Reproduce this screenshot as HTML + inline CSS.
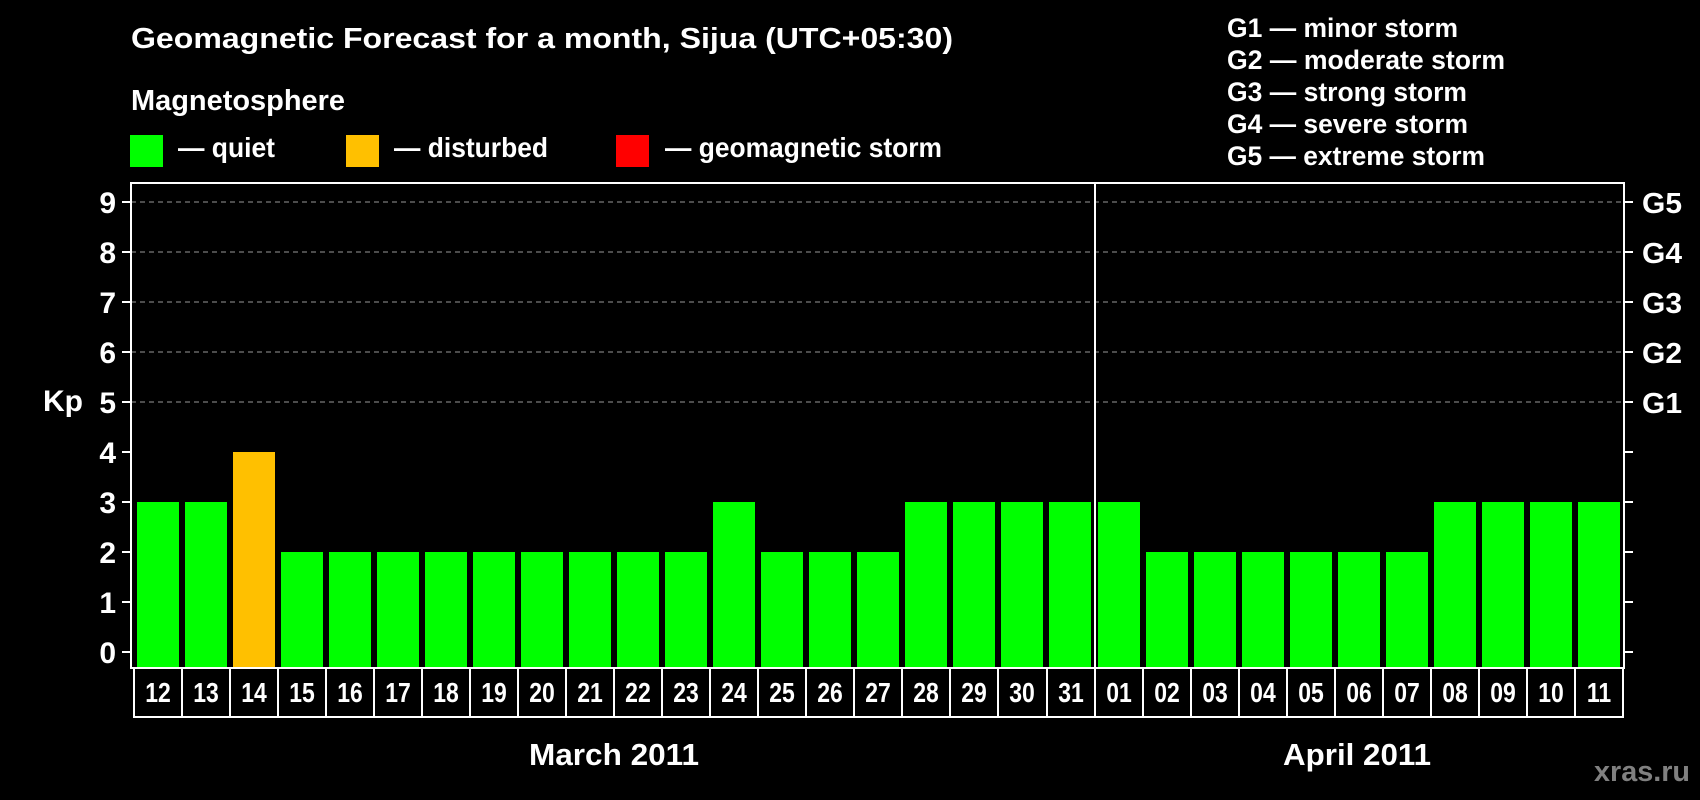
<!DOCTYPE html>
<html><head><meta charset="utf-8"><style>
html,body{margin:0;padding:0;background:#000;width:1700px;height:800px;overflow:hidden}
svg{display:block}
text{font-family:"Liberation Sans",Arial,sans-serif;font-weight:bold;fill:#fff}
</style></head><body>
<svg width="1700" height="800" viewBox="0 0 1700 800" xmlns="http://www.w3.org/2000/svg">
<text x="131" y="48" font-size="29" textLength="822" lengthAdjust="spacingAndGlyphs">Geomagnetic Forecast for a month, Sijua (UTC+05:30)</text>
<text x="131" y="110" font-size="29" textLength="214" lengthAdjust="spacingAndGlyphs">Magnetosphere</text>
<rect x="130" y="135" width="33" height="32" fill="#00ff00"/>
<text x="178" y="157" font-size="28" textLength="97" lengthAdjust="spacingAndGlyphs">— quiet</text>
<rect x="346" y="135" width="33" height="32" fill="#ffc000"/>
<text x="394" y="157" font-size="28" textLength="154" lengthAdjust="spacingAndGlyphs">— disturbed</text>
<rect x="616" y="135" width="33" height="32" fill="#ff0000"/>
<text x="665" y="157" font-size="28" textLength="277" lengthAdjust="spacingAndGlyphs">— geomagnetic storm</text>

<g font-size="27">
<text x="1227" y="37" textLength="231" lengthAdjust="spacingAndGlyphs">G1 — minor storm</text>
<text x="1227" y="69" textLength="278" lengthAdjust="spacingAndGlyphs">G2 — moderate storm</text>
<text x="1227" y="101" textLength="240" lengthAdjust="spacingAndGlyphs">G3 — strong storm</text>
<text x="1227" y="133" textLength="241" lengthAdjust="spacingAndGlyphs">G4 — severe storm</text>
<text x="1227" y="165" textLength="258" lengthAdjust="spacingAndGlyphs">G5 — extreme storm</text>
</g>

<g stroke="#999" stroke-width="1" stroke-dasharray="5,4">
<line x1="131" y1="202" x2="1624" y2="202"/>
<line x1="131" y1="252" x2="1624" y2="252"/>
<line x1="131" y1="302" x2="1624" y2="302"/>
<line x1="131" y1="352" x2="1624" y2="352"/>
<line x1="131" y1="402" x2="1624" y2="402"/>
</g>

<g fill="#00ff00">
<rect x="137" y="502" width="42" height="166"/>
<rect x="185" y="502" width="42" height="166"/>
<rect x="233" y="452" width="42" height="216" fill="#ffc000"/>
<rect x="281" y="552" width="42" height="116"/>
<rect x="329" y="552" width="42" height="116"/>
<rect x="377" y="552" width="42" height="116"/>
<rect x="425" y="552" width="42" height="116"/>
<rect x="473" y="552" width="42" height="116"/>
<rect x="521" y="552" width="42" height="116"/>
<rect x="569" y="552" width="42" height="116"/>
<rect x="617" y="552" width="42" height="116"/>
<rect x="665" y="552" width="42" height="116"/>
<rect x="713" y="502" width="42" height="166"/>
<rect x="761" y="552" width="42" height="116"/>
<rect x="809" y="552" width="42" height="116"/>
<rect x="857" y="552" width="42" height="116"/>
<rect x="905" y="502" width="42" height="166"/>
<rect x="953" y="502" width="42" height="166"/>
<rect x="1001" y="502" width="42" height="166"/>
<rect x="1049" y="502" width="42" height="166"/>
<rect x="1098" y="502" width="42" height="166"/>
<rect x="1146" y="552" width="42" height="116"/>
<rect x="1194" y="552" width="42" height="116"/>
<rect x="1242" y="552" width="42" height="116"/>
<rect x="1290" y="552" width="42" height="116"/>
<rect x="1338" y="552" width="42" height="116"/>
<rect x="1386" y="552" width="42" height="116"/>
<rect x="1434" y="502" width="42" height="166"/>
<rect x="1482" y="502" width="42" height="166"/>
<rect x="1530" y="502" width="42" height="166"/>
<rect x="1578" y="502" width="42" height="166"/>
</g>

<g stroke="#fff" stroke-width="2" fill="none">
<rect x="131" y="183" width="1493" height="485"/>
<line x1="1095" y1="183" x2="1095" y2="668"/>
<rect x="134" y="668" width="1489" height="49"/>
<path d="M182 668V717M230 668V717M278 668V717M326 668V717M374 668V717M422 668V717M470 668V717M518 668V717M566 668V717M614 668V717M662 668V717M710 668V717M758 668V717M806 668V717M854 668V717M902 668V717M950 668V717M998 668V717M1047 668V717M1095 668V717M1143 668V717M1191 668V717M1239 668V717M1287 668V717M1335 668V717M1383 668V717M1431 668V717M1479 668V717M1527 668V717M1575 668V717"/>
<path d="M122 202H131M122 252H131M122 302H131M122 352H131M122 402H131M122 452H131M122 502H131M122 552H131M122 602H131M122 652H131"/>
<path d="M1624 202H1633M1624 252H1633M1624 302H1633M1624 352H1633M1624 402H1633M1624 452H1633M1624 502H1633M1624 552H1633M1624 602H1633M1624 652H1633"/>
</g>

<g font-size="30" text-anchor="end">
<text x="116" y="213">9</text><text x="116" y="263">8</text><text x="116" y="313">7</text>
<text x="116" y="363">6</text><text x="116" y="413">5</text><text x="116" y="463">4</text>
<text x="116" y="513">3</text><text x="116" y="563">2</text><text x="116" y="613">1</text>
<text x="116" y="663">0</text>
</g>
<g font-size="29">
<text x="1642" y="213" textLength="40" lengthAdjust="spacingAndGlyphs">G5</text><text x="1642" y="263" textLength="40" lengthAdjust="spacingAndGlyphs">G4</text><text x="1642" y="313" textLength="40" lengthAdjust="spacingAndGlyphs">G3</text>
<text x="1642" y="363" textLength="40" lengthAdjust="spacingAndGlyphs">G2</text><text x="1642" y="413" textLength="40" lengthAdjust="spacingAndGlyphs">G1</text>
</g>
<text x="43" y="411" font-size="30" textLength="40" lengthAdjust="spacingAndGlyphs">Kp</text>

<g font-size="28" text-anchor="middle">
<g transform="translate(0,702) scale(0.82,1)">
<text x="192.7" y="0">12</text><text x="251.2" y="0">13</text><text x="309.8" y="0">14</text>
<text x="368.3" y="0">15</text><text x="426.8" y="0">16</text><text x="485.4" y="0">17</text>
<text x="543.9" y="0">18</text><text x="602.4" y="0">19</text><text x="661.0" y="0">20</text>
<text x="719.5" y="0">21</text><text x="778.0" y="0">22</text><text x="836.6" y="0">23</text>
<text x="895.1" y="0">24</text><text x="953.7" y="0">25</text><text x="1012.2" y="0">26</text>
<text x="1070.7" y="0">27</text><text x="1129.3" y="0">28</text><text x="1187.8" y="0">29</text>
<text x="1246.3" y="0">30</text><text x="1306.1" y="0">31</text><text x="1364.6" y="0">01</text>
<text x="1423.2" y="0">02</text><text x="1481.7" y="0">03</text><text x="1540.2" y="0">04</text>
<text x="1598.8" y="0">05</text><text x="1657.3" y="0">06</text><text x="1715.9" y="0">07</text>
<text x="1774.4" y="0">08</text><text x="1832.9" y="0">09</text><text x="1891.5" y="0">10</text>
<text x="1950.0" y="0">11</text>
</g>
</g>

<text x="529" y="765" font-size="31" textLength="170" lengthAdjust="spacingAndGlyphs">March 2011</text>
<text x="1283" y="765" font-size="31" textLength="148" lengthAdjust="spacingAndGlyphs">April 2011</text>
<text x="1594" y="781" font-size="29" style="fill:#808080" textLength="96" lengthAdjust="spacingAndGlyphs">xras.ru</text>
</svg>
</body></html>
